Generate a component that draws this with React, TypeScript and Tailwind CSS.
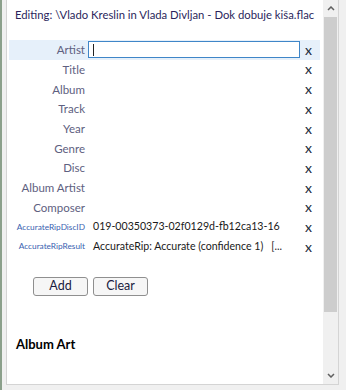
const rows: { label: string; value?: string; small?: boolean; active?: boolean }[] = [
  { label: "Artist", active: true },
  { label: "Title" },
  { label: "Album" },
  { label: "Track" },
  { label: "Year" },
  { label: "Genre" },
  { label: "Disc" },
  { label: "Album Artist" },
  { label: "Composer" },
  { label: "AccurateRipDiscID", value: "019-00350373-02f0129d-fb12ca13-16", small: true },
  { label: "AccurateRipResult", value: "AccurateRip: Accurate (confidence 1)   [...", small: true },
];

export default function App() {
  return (
    <div
      className="flex h-[390px] w-[346px] overflow-hidden bg-[#f0f0f0]"
      style={{ fontFamily: 'Lato, "Noto Sans", sans-serif' }}
    >
      <div className="w-[2px] shrink-0 bg-[#8ba08b]" />
      <div className="flex min-w-0 flex-1 flex-col pl-[4px] pr-[7px]">
        <div className="flex h-[385px] border-b border-l border-r border-[#d4d4d4] bg-white">
          <div className="min-w-0 flex-1 overflow-hidden">
            <div className="pl-[8px] pt-[7px] text-[11.3px] whitespace-nowrap text-[#2b1f5c]">
              Editing: \Vlado Kreslin in Vlada Divljan - Dok dobuje kiša.flac
            </div>
            <div className="mt-[16px] ml-[2px] mr-[3px]">
              {rows.map((r) => (
                <div
                  key={r.label}
                  className={`flex h-[19.7px] items-center ${r.active ? "bg-[#e6f0fa]" : ""}`}
                >
                  <div
                    className={`w-[79px] shrink-0 pr-[3px] text-right whitespace-nowrap ${
                      r.small ? "text-[8.3px] text-[#3a5fb0]" : "text-[11.5px] text-[#5e6080]"
                    }`}
                  >
                    {r.label}
                  </div>
                  <div className="w-[215px] shrink-0">
                    {r.active ? (
                      <div className="flex h-[17px] w-[212px] items-center border border-[#3f86c8] bg-white pl-[4px]">
                        <div className="h-[12px] w-px bg-[#222]" />
                      </div>
                    ) : (
                      <div className="pl-[5px] text-[10.6px] whitespace-pre text-[#1a1a1a]">{r.value}</div>
                    )}
                  </div>
                  <div className="pl-[2px] text-[14px] leading-none text-[#1a2a3a]">x</div>
                </div>
              ))}
            </div>
            <div className="mt-[20px] flex gap-[5px] pl-[26px]">
              <button className="h-[19px] w-[55px] rounded-[3px] border border-[#8f8f8f] bg-[#f6f6f6] text-[12.5px] leading-none text-[#1a1a40]">
                Add
              </button>
              <button className="h-[19px] w-[55px] rounded-[3px] border border-[#8f8f8f] bg-[#f6f6f6] text-[12.5px] leading-none text-[#1a1a40]">
                Clear
              </button>
            </div>
            <div className="mt-[39px] pl-[9px] text-[13px] font-bold text-black">Album Art</div>
          </div>
          <div className="flex w-[15px] shrink-0 flex-col bg-[#f0f0f0]">
            <div className="flex h-[17px] items-center justify-center text-[#606060]">
              <svg width="8" height="5" viewBox="0 0 8 5">
                <path d="M1 4 L4 1 L7 4" fill="none" stroke="currentColor" strokeWidth="1.5" />
              </svg>
            </div>
            <div className="mx-[1px] h-[295px] bg-[#cdcdcd]" />
            <div className="flex-1" />
            <div className="flex h-[17px] items-center justify-center text-[#606060]">
              <svg width="8" height="5" viewBox="0 0 8 5">
                <path d="M1 1 L4 4 L7 1" fill="none" stroke="currentColor" strokeWidth="1.5" />
              </svg>
            </div>
          </div>
        </div>
      </div>
    </div>
  );
}
